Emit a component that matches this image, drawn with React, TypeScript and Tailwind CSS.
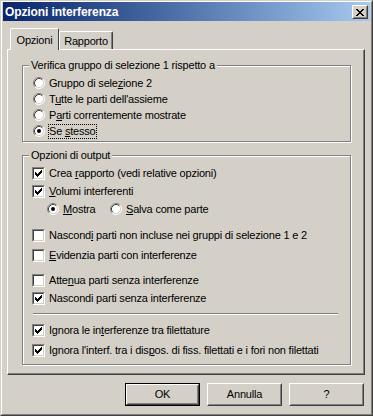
import React from "react";

const CHECK_YS = [2, 3, 4, 3, 2, 1, 0];

function Check({ checked }: { checked?: boolean }) {
  return (
    <div className="w-[13px] h-[13px] shrink-0 border border-t-[#808080] border-l-[#808080] border-r-white border-b-white">
      <div className="w-full h-full bg-white border border-t-[#404040] border-l-[#404040] border-r-[#d4d0c8] border-b-[#d4d0c8] flex items-center justify-center">
        {checked && (
          <svg width="7" height="7" viewBox="0 0 7 7" shapeRendering="crispEdges">
            {CHECK_YS.map((y, i) => (
              <rect key={i} x={i} y={y} width="1" height="3" fill="#000" />
            ))}
          </svg>
        )}
      </div>
    </div>
  );
}

function Radio({ checked }: { checked?: boolean }) {
  return (
    <svg width="12" height="12" viewBox="0 0 12 12" className="shrink-0">
      <circle cx="6" cy="6" r="5" fill="#fff" />
      <path d="M2.11 9.89 A5.5 5.5 0 0 1 9.89 2.11" fill="none" stroke="#808080" strokeWidth="1" />
      <path d="M9.89 2.11 A5.5 5.5 0 0 1 2.11 9.89" fill="none" stroke="#fff" strokeWidth="1" />
      <path d="M2.82 9.18 A4.5 4.5 0 0 1 9.18 2.82" fill="none" stroke="#404040" strokeWidth="1" />
      <path d="M9.18 2.82 A4.5 4.5 0 0 1 2.82 9.18" fill="none" stroke="#d4d0c8" strokeWidth="1" />
      {checked && <circle cx="6" cy="6" r="2" fill="#000" />}
    </svg>
  );
}

function Label({ children, focus }: { children: React.ReactNode; focus?: boolean }) {
  return (
    <span
      className={
        "ml-[3px] border leading-[13px] whitespace-nowrap " +
        (focus ? "border-dotted border-black" : "border-transparent")
      }
    >
      {children}
    </span>
  );
}

function Group({ title, className, children }: { title: string; className: string; children: React.ReactNode }) {
  return (
    <div
      className={
        "relative ml-[14px] w-[329px] border border-[#808080] shadow-[inset_1px_1px_0_#fff,1px_1px_0_#fff] " +
        className
      }
    >
      <span className="absolute -top-[8px] left-[6px] px-[2px] bg-[#d4d0c8] leading-[14px] whitespace-nowrap">
        {title}
      </span>
      {children}
    </div>
  );
}

function Button({ children, def }: { children: React.ReactNode; def?: boolean }) {
  const bevel = (
    <div className="w-full h-full border border-t-white border-l-white border-r-[#404040] border-b-[#404040]">
      <div className="w-full h-full border border-t-[#d4d0c8] border-l-[#d4d0c8] border-r-[#808080] border-b-[#808080] flex items-center justify-center">
        {children}
      </div>
    </div>
  );
  return (
    <div className={"w-[75px] h-[23px] " + (def ? "border border-black" : "")}>{bevel}</div>
  );
}

export default function App() {
  return (
    <div className="w-[373px] h-[416px] bg-[#d4d0c8] border border-t-[#d4d0c8] border-l-[#d4d0c8] border-r-[#404040] border-b-[#404040] text-[11px] tracking-[-0.2px] text-black font-['Liberation_Sans',Arial,sans-serif] overflow-hidden">
      <div className="h-full border border-t-white border-l-white border-r-[#808080] border-b-[#808080] px-[1px] flex flex-col">
        {/* barra del titolo */}
        <div className="h-[19px] bg-gradient-to-r from-[#0a246a] to-[#a6caf0] flex items-center justify-between pl-[2px] pr-[2px]">
          <span className="text-white font-bold text-[12px] tracking-[-0.1px] leading-none">Opzioni interferenza</span>
          <div className="w-[16px] h-[14px] mt-[1px] border border-t-white border-l-white border-r-[#404040] border-b-[#404040]">
            <div className="w-full h-full bg-[#d4d0c8] border border-t-[#d4d0c8] border-l-[#d4d0c8] border-r-[#808080] border-b-[#808080] flex items-center justify-center">
              <svg width="8" height="7" viewBox="0 0 8 7" shapeRendering="crispEdges">
                <path d="M0 0h2v1h-2zM6 0h2v1h-2zM1 1h2v1h-2zM5 1h2v1h-2zM2 2h4v1h-4zM3 3h2v1h-2zM2 4h4v1h-4zM1 5h2v1h-2zM5 5h2v1h-2zM0 6h2v1h-2zM6 6h2v1h-2z" fill="#000" />
              </svg>
            </div>
          </div>
        </div>

        <div className="pl-[4px] pr-[5px]">
          {/* schede */}
          <div className="mt-[7px] h-[21px] flex items-end pl-[3px]">
            <div className="relative z-10 h-[22px] -mb-[1px] w-[49px] bg-[#d4d0c8] rounded-t-[2px] border-t border-l border-r border-t-white border-l-white border-r-[#404040] flex items-start justify-center pt-[3px]">
              Opzioni
            </div>
            <div className="h-[18px] w-[54px] rounded-t-[2px] border-t border-l border-r border-t-white border-l-white border-r-[#404040] shadow-[inset_-1px_0_0_#808080] flex items-start justify-center pt-[1px]">
              Rapporto
            </div>
          </div>

          {/* pannello */}
          <div className="h-[326px] border border-t-white border-l-white border-r-[#404040] border-b-[#404040] shadow-[inset_-1px_-1px_0_#808080] pt-[15px]">
            <Group title="Verifica gruppo di selezione 1 rispetto a" className="h-[77px] pt-[9px] pl-[10px]">
              <div className="h-[16px] flex items-center">
                <Radio />
                <Label>Gruppo di sele<u>z</u>ione 2</Label>
              </div>
              <div className="h-[16px] flex items-center">
                <Radio />
                <Label>T<u>u</u>tte le parti dell'assieme</Label>
              </div>
              <div className="h-[16px] flex items-center">
                <Radio />
                <Label>P<u>a</u>rti correntemente mostrate</Label>
              </div>
              <div className="h-[16px] flex items-center">
                <Radio checked />
                <Label focus>Se <u>s</u>tesso</Label>
              </div>
            </Group>

            <Group title="Opzioni di output" className="mt-[13px] h-[210px] pt-[8px]">
              <div className="h-[18px] flex items-center pl-[9px]">
                <Check checked />
                <Label>Crea <u>r</u>apporto (vedi relative opzioni)</Label>
              </div>
              <div className="h-[18px] flex items-center pl-[9px]">
                <Check checked />
                <Label><u>V</u>olumi interferenti</Label>
              </div>
              <div className="h-[18px] flex items-center pl-[24px]">
                <div className="w-[63px] flex items-center">
                  <Radio checked />
                  <Label><u>M</u>ostra</Label>
                </div>
                <Radio />
                <Label><u>S</u>alva come parte</Label>
              </div>
              <div className="mt-[8px] h-[18px] flex items-center pl-[9px]">
                <Check />
                <Label>Nascond<u>i</u> parti non incluse nei gruppi di selezione 1 e 2</Label>
              </div>
              <div className="mt-[2px] h-[18px] flex items-center pl-[9px]">
                <Check />
                <Label><u>E</u>videnzia parti con interferenze</Label>
              </div>
              <div className="mt-[7px] h-[18px] flex items-center pl-[9px]">
                <Check />
                <Label>Atte<u>n</u>ua parti senza interferenze</Label>
              </div>
              <div className="h-[18px] flex items-center pl-[9px]">
                <Check checked />
                <Label>Nascondi parti senza interferenze</Label>
              </div>
              <div className="mt-[6px] mb-[6px] ml-[10px] mr-[12px] h-[2px] border-t border-t-[#808080] border-b border-b-white" />
              <div className="h-[18px] flex items-center pl-[9px]">
                <Check checked />
                <Label>Ignora le in<u>t</u>erferenze tra filettature</Label>
              </div>
              <div className="mt-[2px] h-[18px] flex items-center pl-[9px]">
                <Check checked />
                <Label>Ignora l'interf. tra i dis<u>p</u>os. di fiss. filettati e i fori non filettati</Label>
              </div>
            </Group>
          </div>

          {/* pulsanti */}
          <div className="mt-[8px] flex justify-end gap-[7px] pr-[1px]">
            <Button def>OK</Button>
            <Button>Annulla</Button>
            <Button>?</Button>
          </div>
        </div>
      </div>
    </div>
  );
}
